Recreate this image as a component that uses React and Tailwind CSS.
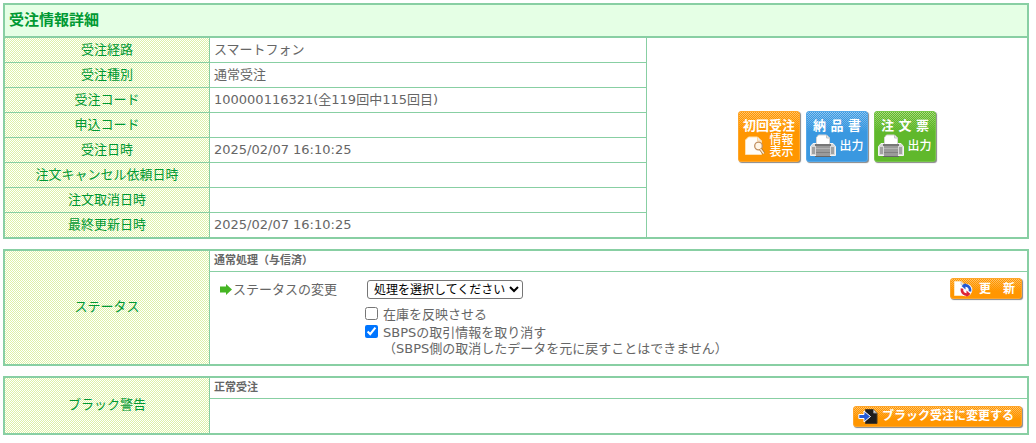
import React from 'react';

const hatch =
  'bg-[conic-gradient(#ffffff_25%,#def2a6_0_50%,#ffffff_0_75%,#def2a6_0)] bg-[length:2px_2px]';
const line = 'border-[#88cfa3]';

const orderRows = [
  ['受注経路', 'スマートフォン'],
  ['受注種別', '通常受注'],
  ['受注コード', '100000116321(全119回中115回目)'],
  ['申込コード', ''],
  ['受注日時', '2025/02/07 16:10:25'],
  ['注文キャンセル依頼日時', ''],
  ['注文取消日時', ''],
  ['最終更新日時', '2025/02/07 16:10:25'],
];

const dotted = {
  orange: 'bg-[conic-gradient(#ffc878_25%,transparent_0_50%,#ffc878_0_75%,transparent_0)]',
  blue: 'bg-[conic-gradient(#9accf2_25%,transparent_0_50%,#9accf2_0_75%,transparent_0)]',
  green: 'bg-[conic-gradient(#b2de88_25%,transparent_0_50%,#b2de88_0_75%,transparent_0)]',
};
const fills = {
  orange: 'bg-[#ff9600] border-[#ffa62a]',
  blue: 'bg-[#3a98e0] border-[#55a8e8]',
  green: 'bg-[#60b82c] border-[#78c64a]',
};

function Dots({ color, className }) {
  return (
    <span
      aria-hidden="true"
      className={`pointer-events-none absolute inset-x-0 top-0 bg-[length:2px_2px] [mask-image:linear-gradient(black,transparent)] ${dotted[color]} ${className}`}
    />
  );
}

function Printer() {
  return (
    <svg width="26" height="24" viewBox="0 0 26 24" aria-hidden="true">
      <path d="M3 9.500h20l2.500 3V21.500h-25v-9z" fill="#d8d8d8" stroke="#f4f4f4" />
      <path d="M2 13h3v7H2zM21 13h3v7h-3z" fill="#a2a2a2" />
      <path d="M6.500 11V3.500l2-2.500h8l3 3v7z" fill="#fff" stroke="#d4d4d4" />
      <path d="M16.500 1v3h3" fill="#e8e8e8" stroke="#c4c4c4" />
      <path d="M5 10h16v2H5z" fill="#777" />
      <path d="M6 12h14v10H6z" fill="#9b9b9b" />
      <path d="M6 14.500h14" stroke="#b4b4b4" />
      <path d="M6 18.500h14" stroke="#808080" />
      <path d="M5 22h16v1H5z" fill="#666" />
    </svg>
  );
}

function Magnifier() {
  return (
    <svg width="22" height="20" viewBox="0 0 22 20" className="shrink-0" aria-hidden="true">
      <path d="M1.500 18.500V4l3-3h9l4 4v13.500z" fill="#fffdf8" stroke="#ffe1b0" />
      <path d="M13.500 1v4h4" fill="#ececec" stroke="#ffd79c" />
      <circle cx="14.500" cy="10" r="3.800" fill="#fff6e6" stroke="#c09060" strokeWidth="1.300" />
      <path d="M16.500 13l3.300 4.500" stroke="#b07838" strokeWidth="3" />
      <path d="M16.500 13l3.300 4.500" stroke="#ffe9c8" strokeWidth="1.500" />
    </svg>
  );
}

function TileButton({ color, label, title, children }) {
  return (
    <button
      type="button"
      aria-label={title}
      className={`relative flex h-[51px] w-[62px] flex-col items-center overflow-hidden rounded-[3px] border pt-[5px] text-white shadow-[1px_1px_1px_#888] ${fills[color]}`}
    >
      <Dots color={color} className="h-5" />
      <span className="relative text-[13px] leading-[17px] font-bold whitespace-nowrap">{label}</span>
      <span className="relative flex w-full items-center justify-center gap-[3px]">{children}</span>
    </button>
  );
}

function BarButton({ className, children }) {
  return (
    <button
      type="button"
      className={`relative flex h-[21px] items-center overflow-hidden rounded-[3px] border text-[12px] leading-4 font-bold text-white shadow-[1px_1px_1px_#888] ${fills.orange} ${className}`}
    >
      <Dots color="orange" className="h-3" />
      {children}
    </button>
  );
}

function RefreshIcon() {
  return (
    <svg className="relative shrink-0" width="20" height="18" viewBox="0 0 20 18" aria-hidden="true">
      <path d="M1.500 1.500H8l3 3V15.500H1.500z" fill="#fff" stroke="#ffe6bd" />
      <path d="M8 1.500v3h3" fill="#e6e6e6" stroke="#d0d0d0" />
      <circle cx="13" cy="10" r="6.300" fill="#fff" />
      <path d="M10.500 5.800C14 4.500 17.800 7 17 11.500" fill="none" stroke="#2459d4" strokeWidth="2.600" />
      <path d="M12.500 3v6.500L8.500 6z" fill="#2459d4" />
      <path d="M15.500 14.200C12 15.500 8.200 13 9 8.500" fill="none" stroke="#dc2438" strokeWidth="2.600" />
      <path d="M13.500 17v-6.500l4 3.500z" fill="#dc2438" />
    </svg>
  );
}

function MoveIcon() {
  return (
    <svg className="relative shrink-0" width="20" height="17" viewBox="0 0 20 17" aria-hidden="true">
      <path d="M7.500 1.500h8l3.500 3.500v10.500H7.500z" fill="#1d1d1d" stroke="#4a3a20" />
      <path d="M15.500 1.500V5H19" fill="#ddd" stroke="#888" />
      <path d="M.8 6.500H6V3l6.500 5.500L6 14v-3.500H.8z" fill="#2459d4" stroke="#fff" />
    </svg>
  );
}

function ArrowIcon() {
  return (
    <svg width="12" height="12" viewBox="0 0 12 12" aria-hidden="true">
      <path d="M0 2.500h6V0l6 5.500-6 5.500V8.500H0z" fill="#45b523" />
    </svg>
  );
}

function PanelHead({ rowSpan, children }) {
  return (
    <th
      scope="row"
      rowSpan={rowSpan}
      className={`border-r pb-0.5 text-center font-normal text-[#009933] ${line} ${hatch}`}
    >
      {children}
    </th>
  );
}

function Panel({ label, children }) {
  return (
    <table
      aria-label={label}
      className={`w-full table-fixed border-separate border-spacing-0 border-2 ${line}`}
    >
      {children}
    </table>
  );
}

export default function App() {
  return (
    <main className="flex flex-col gap-2.5 bg-white pt-[3px] pr-[7px] pb-2 pl-[3px] font-['DejaVu_Sans','Noto_Sans_CJK_JP',sans-serif] text-[13px] leading-4 text-[#666666]">
      <Panel label="受注情報詳細">
        <colgroup>
          <col className="w-[205px]" />
          <col />
          <col className="w-[380px]" />
        </colgroup>
        <thead>
          <tr>
            <th
              colSpan={3}
              className={`h-[33px] border-b-2 bg-[#e5ffe5] px-1 pb-0.5 text-left text-[15px] font-bold text-[#009933] ${line}`}
            >
              <h1>受注情報詳細</h1>
            </th>
          </tr>
        </thead>
        <tbody>
          {orderRows.map(([name, value], i) => {
            const rule = i < orderRows.length - 1 ? 'h-[25px] border-b' : 'h-6';
            return (
              <tr key={name}>
                <th
                  scope="row"
                  className={`border-r text-center font-normal text-[#009933] ${rule} ${line} ${hatch}`}
                >
                  {name}
                </th>
                <td className={`border-r px-1 ${rule} ${line}`}>{value}</td>
                {i === 0 && (
                  <td rowSpan={orderRows.length} className="pb-0.5">
                    <div className="flex justify-center gap-1.5">
                      <TileButton color="orange" label="初回受注" title="初回受注情報表示">
                        <Magnifier />
                        <span className="text-[12px] leading-[12px] font-medium">
                          情報
                          <br />
                          表示
                        </span>
                      </TileButton>
                      <TileButton color="blue" label="納 品 書" title="納品書出力">
                        <Printer />
                        <span className="text-[12px] font-medium">出力</span>
                      </TileButton>
                      <TileButton color="green" label="注 文 票" title="注文票出力">
                        <Printer />
                        <span className="text-[12px] font-medium">出力</span>
                      </TileButton>
                    </div>
                  </td>
                )}
              </tr>
            );
          })}
        </tbody>
      </Panel>

      <Panel label="ステータス">
        <colgroup>
          <col className="w-[205px]" />
          <col />
        </colgroup>
        <tbody>
          <tr>
            <PanelHead rowSpan={2}>ステータス</PanelHead>
            <td className={`h-[21px] border-b px-1 text-[11px] font-bold ${line}`}>通常処理（与信済）</td>
          </tr>
          <tr>
            <td className="h-[92px] pt-1.5 pr-[5px] pl-2.5 align-top">
              <div className="flex items-start justify-between">
                <div className="flex items-start">
                  <label htmlFor="status" className="flex w-[145px] items-center gap-px pt-1">
                    <ArrowIcon />
                    ステータスの変更
                  </label>
                  <div className="pt-0.5">
                    <select
                      id="status"
                      className="ml-0.5 block h-[19px] w-[156px] rounded-[3px] border border-[#767676] bg-white pl-0.5 text-[12px] leading-4 text-black"
                    >
                      <option>処理を選択してください</option>
                    </select>
                    <div className="mt-2 flex items-start gap-[5px]">
                      <input id="stock" type="checkbox" className="size-[13px] accent-[#0075ff]" />
                      <label htmlFor="stock">在庫を反映させる</label>
                    </div>
                    <div className="mt-0.5 flex items-start gap-[5px]">
                      <input id="sbps" type="checkbox" defaultChecked className="size-[13px] accent-[#0075ff]" />
                      <label htmlFor="sbps">
                        SBPSの取引情報を取り消す
                        <br />
                        （SBPS側の取消したデータを元に戻すことはできません）
                      </label>
                    </div>
                  </div>
                </div>
                <BarButton className="w-[72px] gap-1.5 pl-0.5">
                  <RefreshIcon />
                  <span className="relative whitespace-nowrap">更　新</span>
                </BarButton>
              </div>
            </td>
          </tr>
        </tbody>
      </Panel>

      <Panel label="ブラック警告">
        <colgroup>
          <col className="w-[205px]" />
          <col />
        </colgroup>
        <tbody>
          <tr>
            <PanelHead rowSpan={2}>ブラック警告</PanelHead>
            <td className={`h-[21px] border-b px-1 text-[11px] font-bold ${line}`}>正常受注</td>
          </tr>
          <tr>
            <td className="h-[34px] pr-[5px]">
              <div className="flex justify-end">
                <BarButton className="w-[169px] gap-1 pl-1">
                  <MoveIcon />
                  <span className="relative whitespace-nowrap">ブラック受注に変更する</span>
                </BarButton>
              </div>
            </td>
          </tr>
        </tbody>
      </Panel>
    </main>
  );
}
